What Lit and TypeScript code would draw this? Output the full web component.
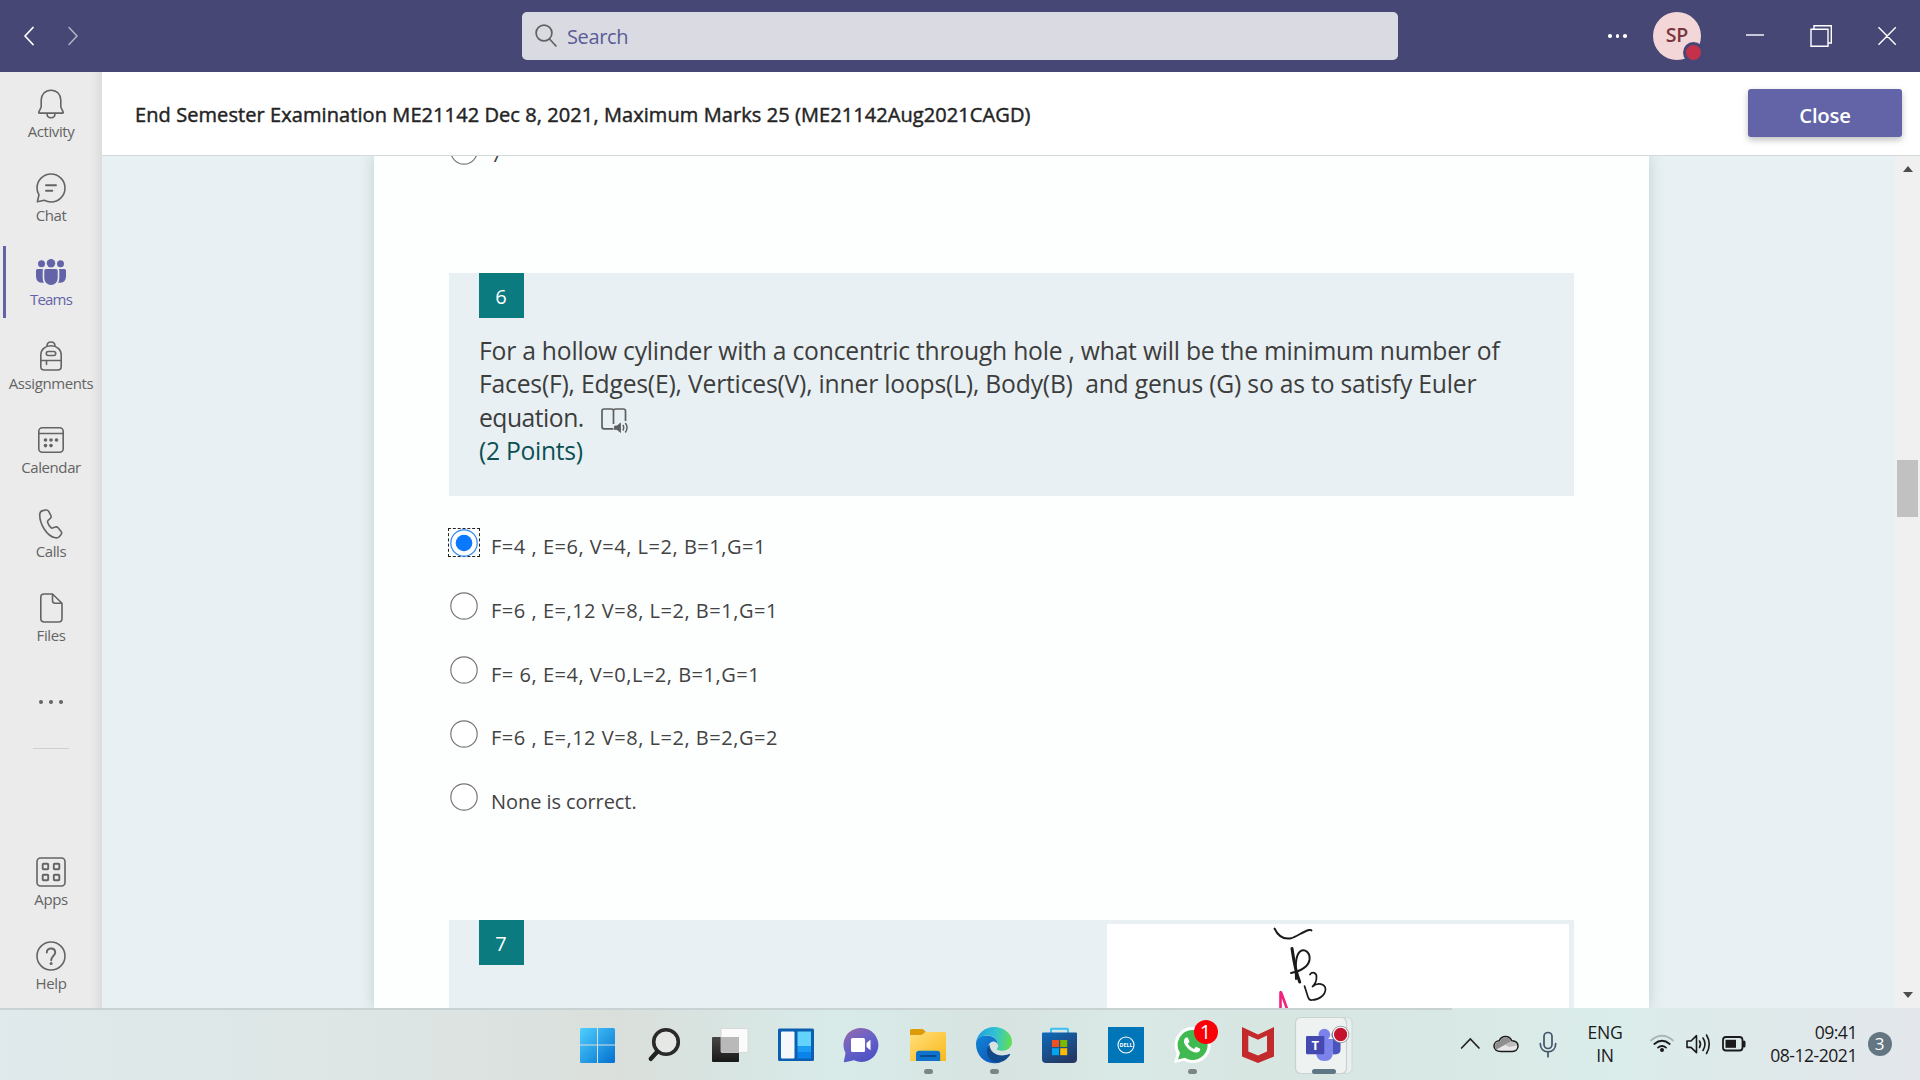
import { LitElement, html, svg, css, nothing } from "lit";
import { customElement } from "lit/decorators.js";
import { classMap } from "lit/directives/class-map.js";

const railIcons: Record<string, unknown> = {
  Activity: svg`<path d="M15 1.2C9.2 1.2 5.2 5.4 5.2 11v7L2.8 23.2q-.3.9.6.9h23.2q.9 0 .6-.9L24.8 18v-7C24.8 5.4 20.8 1.2 15 1.2z"/><path d="M11 24.5c0 2.8 1.8 4.3 4 4.3s4-1.5 4-4.3"/>`,
  Chat: svg`<path d="M1.4 28.8L3 21.8C1.700 19.700 1 17.400 1 15A14 14 0 1 1 15 29C12.600 29 10.400 28.400 8.400 27.300z"/><path d="M10 12.300h10M10 17.800h6.300" stroke-width="1.900"/>`,
  Teams: svg`<g fill="currentColor" stroke="none"><circle cx="5.500" cy="6.700" r="3.500"/><circle cx="24.500" cy="6.700" r="3.500"/><circle cx="15" cy="6.200" r="4.200"/><path d="M10 12h10q1.700 0 1.700 1.700v7.600a6.700 6.700 0 0 1-13.400 0v-7.600Q8.300 12 10 12z"/><path d="M1.600 12h5.600q-.5.800-.5 1.700v7.600q0 2.600 1.300 4.500Q0 26.400 0 19.500v-5.900Q0 12 1.600 12zM28.400 12h-5.600q.5.800.5 1.700v7.600q0 2.600-1.300 4.500 8 .6 8-6.300v-5.900Q30 12 28.400 12z"/></g>`,
  Assignments: svg`<path d="M4.800 25.500V14C4.800 8.500 9 4.700 15 4.700S25.200 8.500 25.200 14v11.500q0 3.500-3.500 3.500H8.300q-3.500 0-3.500-3.500zM11 5.200C11 2.500 12.700 1 15 1s4 1.500 4 4.200M4.800 19.500h20.400M10.500 19.500v4"/><rect x="10.300" y="10.500" width="9.400" height="4" rx="2"/>`,
  Calendar: svg`<rect x="2.800" y="2.800" width="24.400" height="24.400" rx="3.500"/><path d="M2.800 8.500h24.400"/><g fill="currentColor" stroke="none"><circle cx="9.500" cy="15" r="1.800"/><circle cx="15" cy="15" r="1.800"/><circle cx="20.500" cy="15" r="1.800"/><circle cx="9.500" cy="20.600" r="1.800"/><circle cx="15" cy="20.600" r="1.800"/></g>`,
  Calls: svg`<path d="M6.800 1.600l3-.6q1.900-.3 2.900 1.400l2.200 4.200q.7 1.500-.5 2.700l-2.500 2.400q-.6.700-.3 1.500 1 3.200 3.400 5.500.7.600 1.600.3l2.700-1q1.700-.5 2.800.8l3 3.600q1.100 1.500 0 3l-1.600 2q-1.500 1.800-4.200 1.400C11 27.400 3.600 15 3.700 5.800q.2-3.600 3.100-4.200z"/>`,
  Files: svg`<path d="M8 1h8.500L26 10.200V25.500Q26 29 22.500 29H8.500Q4.800 29 4.800 25.500V4Q4.800 1 8 1zM16.500 1v6.500q0 2.700 2.700 2.700H26"/>`,
  Apps: svg`<rect x="1" y="1" width="28" height="28" rx="3.500"/><g stroke-width="1.900"><rect x="6.700" y="6.700" width="5.500" height="5.500" rx=".8"/><rect x="17.800" y="6.700" width="5.500" height="5.500" rx=".8"/><rect x="6.700" y="17.800" width="5.500" height="5.500" rx=".8"/><rect x="17.800" y="17.800" width="5.500" height="5.500" rx=".8"/></g>`,
  Help: svg`<circle cx="15" cy="15" r="14"/><path d="M10.800 11.500c0-2.500 1.800-4 4.200-4s4.200 1.600 4.200 3.900c0 3.300-4 3.700-4 7.800" stroke-width="1.900"/><circle cx="15.100" cy="22.600" r="1.500" fill="currentColor" stroke="none"/>`,
};

const taskIcons = [
  // start
  svg`<defs><linearGradient id="w" x1="0" y1="0" x2="1" y2="1" gradientUnits="objectBoundingBox"><stop offset="0" stop-color="#4fd0ff"/><stop offset="1" stop-color="#0370cf"/></linearGradient></defs><path fill="url(#w)" d="M16.500 20H32v16.500H15v-15Q15 20 16.500 20zM33 20h15.500Q50 20 50 21.500v15H33zM15 37.500h17V55H16.500Q15 55 15 53.500zM33 37.500h17v16q0 1.500-1.500 1.500H33z"/>`,
  // search
  svg`<circle cx="35" cy="34" r="12.300" fill="#e6e8e6" stroke="#2a2a2a" stroke-width="3.600"/><path d="M26.500 43.500l-6.700 7.300" stroke="#222" stroke-width="4.400" stroke-linecap="round"/>`,
  // task view
  svg`<defs><linearGradient id="tv" x2="0" y2="1"><stop stop-color="#484644"/><stop offset="1" stop-color="#181818"/></linearGradient></defs><rect x="15" y="29" width="27" height="25" rx="1" fill="url(#tv)"/><rect x="24" y="20.500" width="27" height="24" rx="1.200" fill="#fbfbfb" stroke="#d2d2d2" stroke-width=".8"/><path d="M24 29h18v15.500H25q-1 0-1-1z" fill="#b9b9b9"/>`,
  // widgets
  svg`<rect x="15" y="20.500" width="36" height="32.500" rx="1.500" fill="#0b5eb0"/><rect x="18" y="23.500" width="13.500" height="27" rx="1" fill="#f5f7fa"/><path d="M34.500 23.500H48V38H34.500z" fill="#63d3fc"/><path d="M34.500 38H48v6H34.500z" fill="#1a9df2"/><path d="M34.500 44H48v6.500H34.500z" fill="#0a84ea"/>`,
  // chat
  svg`<defs><linearGradient id="ch" x1="0" y1="0" x2=".6" y2="1"><stop stop-color="#9a69a8"/><stop offset=".5" stop-color="#6a63c6"/><stop offset="1" stop-color="#4f52c4"/></linearGradient></defs><path fill="url(#ch)" d="M32 20a17 17 0 1 1-7 32.300L15.800 54.300q-1.200.2-.9-1L16.500 45A17 17 0 0 1 32 20z"/><rect x="22" y="30" width="14" height="14" rx="1.500" fill="#fff"/><path d="M37.500 35l4-3.200v10.500l-4-3.200z" fill="#fff"/>`,
  // explorer
  svg`<defs><linearGradient id="fo" x1="0" y1="0" x2="1" y2="1"><stop stop-color="#ffdf7c"/><stop offset="1" stop-color="#fbb91a"/></linearGradient></defs><path d="M15 22.500Q15 21 16.500 21h10.500q1 0 2 1l2.500 2.500H40V30H15z" fill="#dd9b08"/><path d="M15 27h10.500q1.500 0 2.500-1l1.300-1.300q.8-.7 1.800-.7H49.500Q51 24 51 25.500V53H15z" fill="url(#fo)"/><path d="M21 53v-7q0-3.200 3.200-3.200H42q3.200 0 3.200 3.200v7z" fill="#0d73cc"/><path d="M26 48h14.500" stroke="#0a4a90" stroke-width="1.800" stroke-linecap="round"/>`,
  // edge
  svg`<defs><linearGradient id="e1" x1="0" y1=".4" x2="1" y2=".5"><stop stop-color="#1f9fdf"/><stop offset=".55" stop-color="#34c4cf"/><stop offset="1" stop-color="#62e04d"/></linearGradient><linearGradient id="e2" x1="0" y1="0" x2=".6" y2="1"><stop stop-color="#1285d6"/><stop offset="1" stop-color="#0c5cbc"/></linearGradient></defs><g transform="translate(15 19)"><path fill="url(#e2)" d="M0 17C0 11 5 8 11 8.500c6 .3 11 4 11 9.500-1-3.500-5-4.500-8-2-3 3-2.500 9 1 13 3 4 7 6 10 6-2 1-5 1.200-7 1.200C8 36 0 28 0 17z"/><path fill="#114a8b" d="M13.500 17.500C9.500 22 9.500 30 17 34.500q3.500 1.600 7 .8c4.500-1 8-4.300 10-7.300.5-.8-.2-1.300-1-.9-9 4-19.500-.6-19.500-9.600z"/><path fill="url(#e1)" d="M0 16C1 6.500 9 0 18 0c10 0 18 7 18 14.500C36 20 32 23.700 26.500 23.700c-4.500 0-6.300-1.200-5.300-2.300.6-.7 1-2 .9-3.600C21.500 12 16.500 8.300 11 8.300 5 8.300.8 12 0 16z"/></g>`,
  // store
  svg`<defs><linearGradient id="st" x1="0" y1="0" x2=".6" y2="1"><stop stop-color="#0d6bbd"/><stop offset="1" stop-color="#243a66"/></linearGradient></defs><path d="M24 27v-5.500q0-.8.800-.8h15.400q.8 0 .8.800V27" fill="none" stroke="#38c1f2" stroke-width="2"/><path fill="url(#st)" d="M16 24.500h33q1 0 1 1V51q0 4-4 4H19q-4 0-4-4V25.500q0-1 1-1z"/><path fill="#f25022" d="M25 32h7v7h-7z"/><path fill="#7fba00" d="M33.200 32h7v7h-7z"/><path fill="#00a4ef" d="M25 40.200h7v7h-7z"/><path fill="#ffb900" d="M33.200 40.200h7v7h-7z"/>`,
  // dell
  svg`<path fill="#0076b8" d="M15 19h36v36H15z"/><circle cx="33" cy="37" r="8" fill="none" stroke="#fff" stroke-width="1.100"/><text x="33" y="39.200" text-anchor="middle" font-size="5.600" font-weight="700" fill="#fff" textLength="13" lengthAdjust="spacingAndGlyphs">DELL</text>`,
  // whatsapp
  svg`<path fill="#fff" d="M33.500 19a18 18 0 1 1-8.500 33.700L15 55l2.700-9.500A18 18 0 0 1 33.500 19z"/><path fill="#3fb950" d="M33.500 22a15 15 0 1 1-7.700 27.800L19 51.500l2-6.500A15 15 0 0 1 33.500 22z"/><g transform="translate(16.800 20.800) scale(1.350)"><path fill="#fff" d="M17.472 14.382c-.297-.149-1.758-.867-2.030-.967-.273-.099-.471-.148-.67.15-.197.297-.767.966-.94 1.164-.173.199-.347.223-.644.075-.297-.15-1.255-.463-2.390-1.475-.883-.788-1.480-1.761-1.653-2.059-.173-.297-.018-.458.13-.606.134-.133.298-.347.446-.52.149-.174.198-.298.298-.497.099-.198.05-.371-.025-.52-.075-.149-.669-1.612-.916-2.207-.242-.579-.487-.5-.669-.51-.173-.008-.371-.01-.57-.01-.198 0-.52.074-.792.372-.272.297-1.040 1.016-1.040 2.479 0 1.462 1.065 2.875 1.213 3.074.149.198 2.096 3.200 5.077 4.487.709.306 1.262.489 1.694.625.712.227 1.360.195 1.871.118.571-.085 1.758-.719 2.006-1.413.248-.694.248-1.289.173-1.413-.074-.124-.272-.198-.57-.347"/></g><circle cx="47" cy="24" r="12" fill="#fb0007"/><text x="46.500" y="31" text-anchor="middle" font-size="20" fill="#fff">1</text>`,
  // mcafee
  svg`<path fill="#c22a2c" fill-rule="evenodd" d="M17 19l16 7.500L49 19v29.500L33 55l-16-6.500zM23.300 27.500v16L33 47.500l9-4v-16l-9 4.200z"/>`,
  // teams
  svg`<rect x="8" y="9.500" width="53" height="56" rx="5" fill="#e9efee" stroke="#cbd8d5"/><rect x="4.500" y="9.500" width="51" height="56" rx="5" fill="#eef2f1" stroke="#c6d3d0" stroke-width="1.200"/><circle cx="45" cy="27" r="4.500" fill="#4b53bc"/><path d="M42 31h7.500v11q0 4.500-7.500 4.500z" fill="#4b53bc"/><circle cx="33.300" cy="26.500" r="5.800" fill="#7b83eb"/><path d="M25 31h17v12.500q0 9.500-8.500 9.500T25 43.500z" fill="#7b83eb"/><rect x="15" y="28" width="18.300" height="18.300" rx="1.200" fill="#4449b0"/><text x="24.200" y="42" text-anchor="middle" font-size="13" font-weight="700" fill="#fff">T</text><circle cx="49.600" cy="26.500" r="7.300" fill="#c4122f" stroke="#fff" stroke-width="1.300"/><circle cx="49.600" cy="26.500" r="8.300" fill="none" stroke="#8a8a8a" stroke-width=".8"/>`,
];
const running = new Map([[5, 9], [6, 9], [9, 9], [11, 24]]);

@customElement("side-rail")
class SideRail extends LitElement {
  static styles = css`
    :host { display: flex; flex-direction: column; width: 102px; flex: none; color: #646464;
      background: linear-gradient(90deg, #ebebeb 0 90px, #e6e6e6 95px, #dcdcdc 102px); }
    .item { position: relative; height: 84px; display: flex; flex-direction: column; align-items: center; padding-top: 17px; box-sizing: border-box; }
    .item svg { width: 30px; height: 30px; display: block; fill: none; stroke: currentColor; stroke-width: 1.6; stroke-linejoin: round; stroke-linecap: round; }
    .label { font-size: 15px; line-height: 20px; margin-top: 2px; letter-spacing: -0.4px; white-space: nowrap; }
    .active { color: #6264a7; }
    .active .label { letter-spacing: -0.8px; }
    .active::before { content: ""; position: absolute; left: 3px; top: 6px; width: 3px; height: 72px; background: #6264a7; }
    .more { height: 88px; display: flex; align-items: center; justify-content: center; gap: 5.6px; padding-bottom: 4px; box-sizing: border-box; }
    .more i { width: 4px; height: 4px; border-radius: 50%; background: #646464; }
    .rule { width: 36px; height: 1px; background: #cfcfcf; margin: 0 auto; }
    .spacer { flex: 1; }
  `;
  item(name: string) {
    return html`<div class=${classMap({ item: true, active: name === "Teams" })}>
      <svg viewBox="0 0 30 30">${railIcons[name]}</svg><span class="label">${name}</span></div>`;
  }
  render() {
    return html`${["Activity", "Chat", "Teams", "Assignments", "Calendar", "Calls", "Files"].map((n) => this.item(n))}
      <div class="more"><i></i><i></i><i></i></div>
      <div class="rule"></div><div class="spacer"></div>
      ${["Apps", "Help"].map((n) => this.item(n))}`;
  }
}

@customElement("task-bar")
class TaskBar extends LitElement {
  static styles = css`
    :host { display: flex; height: 72px; flex: none; color: #1b1b1b; position: relative;
      background: linear-gradient(90deg, #e0e9eb 0, #dfe8e9 120px, #dde5e4 400px, #dadfdb 620px, #d8e5e2 730px, #d8ebe9 840px, #d7e3e0 1000px, #d9e9e6 1120px, #d8e6e2 1250px, #d8e8e4 1440px, #dbedeb 1620px, #dee9ea 1740px, #e3e7eb 1920px); }
    :host::before { content: ""; position: absolute; left: 0; top: 0; width: 1452px; height: 2px; background: #c8d2d2; }
    .apps { display: flex; margin-left: 565px; }
    .app { width: 66px; height: 72px; position: relative; }
    .app svg { display: block; }
    .pill { position: absolute; bottom: 6px; left: 0; right: 0; margin: auto; height: 5px; border-radius: 3px; background: #7d8584; }
    .pill.on { background: #5f7684; }
    .tray { display: flex; margin-left: 101px; align-items: stretch; }
    .tray svg { display: block; }
    .lang { width: 60px; margin-left: 6px; text-align: center; }
    .lang, .clock { font-size: 17.6px; line-height: 23px; padding-top: 13px; box-sizing: border-box; white-space: nowrap; }
    .lang { letter-spacing: -0.3px; }
    .clock { width: 110px; text-align: right; letter-spacing: -0.5px; }
    .count { width: 24px; height: 24px; border-radius: 50%; background: #637681; color: #fff; font-size: 17px; line-height: 23px; text-align: center; margin: 24px 0 0 10.5px; }
  `;
  render() {
    return html`
      <div class="apps">${taskIcons.map((icon, i) => html`<div class="app">
        <svg width="66" height="72" viewBox="0 0 66 72" fill="none" font-family="Open Sans, sans-serif">${icon}</svg>
        ${running.has(i) ? html`<span class=${classMap({ pill: true, on: i === 11 })} style="width:${running.get(i)}px"></span>` : nothing}
      </div>`)}</div>
      <div class="tray">
        <svg width="111" height="72" viewBox="0 0 111 72" fill="none">
          <path d="M3.600 40l8.700-9 8.700 9" stroke="#222" stroke-width="1.700" stroke-linecap="round"/>
          <g transform="translate(1 0)"><path d="M42 43.500c-4.500 0-7-2.500-7-5.500 0-3.200 2.600-5.200 5.300-5.300C41.500 29.800 44 28.500 46.500 28.500c3 0 5.300 1.700 6.300 4.300 4 .3 6.200 2.600 6.200 5.300 0 3.200-2.500 5.400-5.500 5.400z" fill="#e7e7e7" stroke="#1a1a1a" stroke-width="1.500"/>
          <path d="M36 38c0-2.800 2.300-4.600 5-4.600 1-2.600 3-4.100 5.500-4.100 2.800 0 4.800 1.500 5.700 4.200L41 39.500l-3.500 2Q36 40 36 38z" fill="#8f8f8f"/><path d="M46 36.800l6.500-3.200q4.500.4 5.500 3.900L50 39z" fill="#bdbdbd"/></g>
          <g stroke="#43536a" stroke-width="1.700" transform="translate(1 0)"><rect x="85" y="24.500" width="8" height="16" rx="4"/><path d="M81.300 35.500c0 5.500 3.300 8.300 7.700 8.300s7.700-2.800 7.700-8.300M89 44v4.700" stroke-linecap="round"/></g>
        </svg>
        <div class="lang">ENG<br>IN</div>
        <svg width="112" height="72" viewBox="1635 1008 112 72" fill="none" stroke="#1b1b1b" stroke-width="1.800" stroke-linecap="round">
          <path d="M1651 1040.500q11-9.500 22 0" stroke="#a9b6b5"/><path d="M1654.300 1044q7.700-6.500 15.400 0M1658 1047.600q4-3.300 8 0"/><circle cx="1662" cy="1050" r="2" fill="#1b1b1b" stroke="none"/>
          <path d="M1687 1041h4l5.500-5.300v17l-5.500-5.300h-4z" stroke-width="1.600" stroke-linejoin="round"/><path d="M1699.500 1041q2 3 0 6.500M1703 1038q4 6 0 12.500M1706.500 1035q5.500 9 0 18.500" stroke-width="1.600"/>
          <rect x="1723" y="1037" width="19.500" height="13.500" rx="3"/><rect x="1725.500" y="1039.800" width="10.500" height="8" fill="#1b1b1b" stroke="none"/><path d="M1744 1042v4" stroke-width="3"/>
        </svg>
        <div class="clock">09:41<br>08-12-2021</div>
        <div class="count">3</div>
      </div>`;
  }
}

const options = [
  "F=4 , E=6, V=4, L=2, B=1,G=1",
  "F=6 , E=,12 V=8, L=2, B=1,G=1",
  "F= 6, E=4, V=0,L=2, B=1,G=1",
  "F=6 , E=,12 V=8, L=2, B=2,G=2",
  "None is correct.",
];

@customElement("app-root")
class AppRoot extends LitElement {
  static styles = css`
    :host { display: flex; flex-direction: column; width: 1920px; height: 1080px; overflow: hidden; font-family: "Open Sans", "Noto Sans", sans-serif; background: #fff; }
    svg { display: block; fill: none; }
    .top { height: 72px; flex: none; background: #464775; display: flex; align-items: center; }
    .nav { margin-left: 22px; width: 500px; }
    .search { width: 876px; height: 48px; border-radius: 5px; background: #dadae2; display: flex; align-items: center; color: #595b97; font-size: 20px; gap: 10px; padding-left: 13px; box-sizing: border-box; letter-spacing: -0.35px; }
    .dots { margin-left: 210px; display: flex; gap: 4px; width: 45px; }
    .dots i { width: 3.600px; height: 3.600px; border-radius: 50%; background: #fff; }
    .avatar { width: 48px; height: 48px; border-radius: 50%; background: #f3d6d8; color: #78363c; font-weight: 600; font-size: 19.5px; line-height: 46px; text-align: center; position: relative; }
    .presence { position: absolute; left: 30px; top: 30px; width: 15px; height: 15px; border-radius: 50%; background: #c4314b; border: 3px solid #464775; }
    .win { margin-left: 42px; }
    .middle { flex: 1; display: flex; min-height: 0; }
    .pane { flex: 1; display: flex; flex-direction: column; min-width: 0; }
    .header { height: 84px; box-sizing: border-box; border-bottom: 1px solid #d3dadc; display: flex; align-items: center; justify-content: space-between; padding: 0 18px 0 33px; flex: none; }
    .title { font-size: 20px; padding-top: 1.5px; color: #242424; letter-spacing: 0.08px; white-space: nowrap; -webkit-text-stroke: 0.45px #242424; }
    .close { width: 154px; height: 48px; margin-top: -1px; border-radius: 3px; background: #6264a7; color: #fff; font: 600 20.3px/50px "Open Sans", sans-serif; text-align: center; border: 0; padding: 1px 0 0; box-shadow: 0 3px 6px rgba(0,0,0,.25); letter-spacing: -0.2px; }
    .scroll { flex: 1; min-height: 0; display: flex; background: #e8f0f3; overflow: hidden; }
    .paper { width: 1275px; margin-left: 272px; box-sizing: border-box; padding: 0 75px; background: #fdfefe; box-shadow: 0 0 14px rgba(60,90,95,.22); height: 852px; overflow: hidden; clip-path: inset(0 -20px); }
    .bar { width: 25px; margin-left: auto; background: #f0f0f0; display: flex; flex-direction: column; align-items: center; }
    .thumb { width: 21px; height: 57px; background: #c1c1c1; margin-top: 288px; }
    .arrow { border: 5.5px solid transparent; border-top: 0; border-bottom: 6px solid #4d4d4d; margin-top: 10px; }
    .arrow.down { transform: rotate(180deg); margin: auto 0 10px; }
    .option { height: 63.7px; display: flex; gap: 11px; margin-left: -1px; color: #434343; font-size: 20px; line-height: 65px; letter-spacing: -0.07px; white-space: nowrap; }
    .option .formula { letter-spacing: 0.52px; }
    .first { margin-top: -33.7px; }
    .radio { width: 32px; height: 29px; box-sizing: border-box; margin-top: 13.7px; flex: none; display: flex; align-items: center; justify-content: center; }
    .radio.on { border: 1px dashed #222; }
    .question { background: #e8f0f3; box-sizing: border-box; padding: 0 30px; margin-top: 87.1px; height: 223px; }
    .num { width: 45px; height: 45px; background: #0b7b7f; color: #fff; font-size: 20px; line-height: 47px; text-align: center; flex: none; text-indent: -1px; }
    .text { margin-top: 15.8px; font-size: 24.7px; line-height: 33.4px; color: #3d3d3d; white-space: pre; }
    .line { display: flex; align-items: center; height: 33.4px; }
    .l1 { letter-spacing: -0.23px; }
    .l2 { letter-spacing: -0.2px; }
    .l3 { letter-spacing: -0.5px; }
    .points { color: #0c5053; letter-spacing: -0.3px; }
    .reader { margin-left: 17.5px; margin-top: 6px; }
    .answers { margin-top: 18.3px; }
    .seven { display: flex; justify-content: space-between; padding-right: 5px; margin-top: 87.2px; }
    .sketch { background: #fff; width: 462px; margin-top: 4px; }
  `;

  option(text: string, on: boolean, cls = "") {
    return html`<div class="option ${cls}"><span class=${classMap({ radio: true, on })}>
      <svg width="28" height="28" viewBox="-14 -14 28 28"><circle r="13.200" fill="#fff" stroke=${on ? "#2a86f5" : "#777"} stroke-width="1.200"/>${on ? svg`<circle r="8.300" fill="#0a78ff"/>` : nothing}</svg>
      </span><span class=${classMap({ formula: text.includes("=") })}>${text}</span></div>`;
  }

  render() {
    return html`
      <div class="top">
        <svg class="nav" width="500" height="24" viewBox="0 0 500 24" stroke-linecap="round" stroke-linejoin="round"><path d="M11 3.500L3 12l8 8.500" stroke="#fff" stroke-width="1.800"/><path d="M47 3.500l8 8.500-8 8.500" stroke="#b5b5c8" stroke-width="1.500"/></svg>
        <div class="search"><svg width="22" height="24" viewBox="0 0 22 24" stroke="#616161" stroke-width="1.700" stroke-linecap="round"><circle cx="9" cy="9" r="7.900"/><path d="M14.500 15l6.500 7"/></svg><span>Search</span></div>
        <div class="dots"><i></i><i></i><i></i></div>
        <div class="avatar">SP<span class="presence"></span></div>
        <svg class="win" width="156" height="24" viewBox="1743 24 156 24" stroke="#fff" stroke-width="1.400"><path d="M1746 35h18"/><path d="M1811 29.300h17v17h-17zM1814 29v-3.300h17.300V43H1828M1878.500 27.300l17.300 17.400M1895.800 27.300l-17.300 17.400"/></svg>
      </div>
      <div class="middle">
        <side-rail></side-rail>
        <div class="pane">
          <div class="header">
            <span class="title">End Semester Examination ME21142 Dec 8, 2021, Maximum Marks 25 (ME21142Aug2021CAGD)</span>
            <button class="close">Close</button>
          </div>
          <div class="scroll">
            <div class="paper">
              ${this.option("7", false, "first")}
              <div class="question">
                <div class="num">6</div>
                <div class="text"><div class="line l1">For a hollow cylinder with a concentric through hole , what will be the minimum number of</div><div class="line l2">Faces(F), Edges(E), Vertices(V), inner loops(L), Body(B)  and genus (G) so as to satisfy Euler</div><div class="line l3">equation.<svg class="reader" width="28" height="25" viewBox="0 0 28 25" stroke="#5c5f60" stroke-width="1.700"><path d="M12.500 20.800H3q-2 0-2-2V3q0-2 2-2h7.500Q12.500 1 12.500 3v13M12.500 3q0-2 2-2h7.700q2.300 0 2.300 2v10"/><path d="M13.500 18h2.500l3.500-3v9.500L16 21.500h-2.500z" fill="#5c5f60" stroke-width=".8"/><path d="M21.800 17q1.800 2.500 0 5.500M24.300 15q3.500 4.500 0 9.500" stroke-width="1.500"/></svg></div><div class="line points">(2 Points)</div></div>
              </div>
              <div class="answers">${options.map((o, i) => this.option(o, i === 0))}</div>
              <div class="question seven">
                <div class="num">7</div>
                <svg class="sketch" width="462" height="219" viewBox="0 0 462 219" stroke="#1a1a1a" stroke-width="1.900" stroke-linecap="round" stroke-linejoin="round">
                  <path d="M167.500 4.500C171 12 177 15.500 184 14.300C190 12.500 196 7.500 202 6Q204 5.500 204.500 6.500"/>
                  <path d="M185 24.500C186.500 35 188 46 192.700 58" stroke-width="3"/><path d="M189 55C188.500 43 188 32 193 27.500C198 24 203.500 29 202.500 36C201 43 194 47 184 49" stroke-width="2"/>
                  <path d="M203 50.500C205 47.500 210 48 209.500 53.500C209.500 57 207 61 205.500 62.500C211 58 218 60 218.500 65C218.500 71 212 76 205 76Q202 76.500 201 73L197.500 62" stroke-width="1.700"/>
                  <path d="M173.500 85V69Q173.500 67 174.300 69L180.500 86" stroke="#f0207c" stroke-width="2.600"/>
                </svg>
              </div>
            </div>
            <div class="bar"><span class="arrow"></span><span class="thumb"></span><span class="arrow down"></span></div>
          </div>
        </div>
      </div>
      <task-bar></task-bar>`;
  }
}
